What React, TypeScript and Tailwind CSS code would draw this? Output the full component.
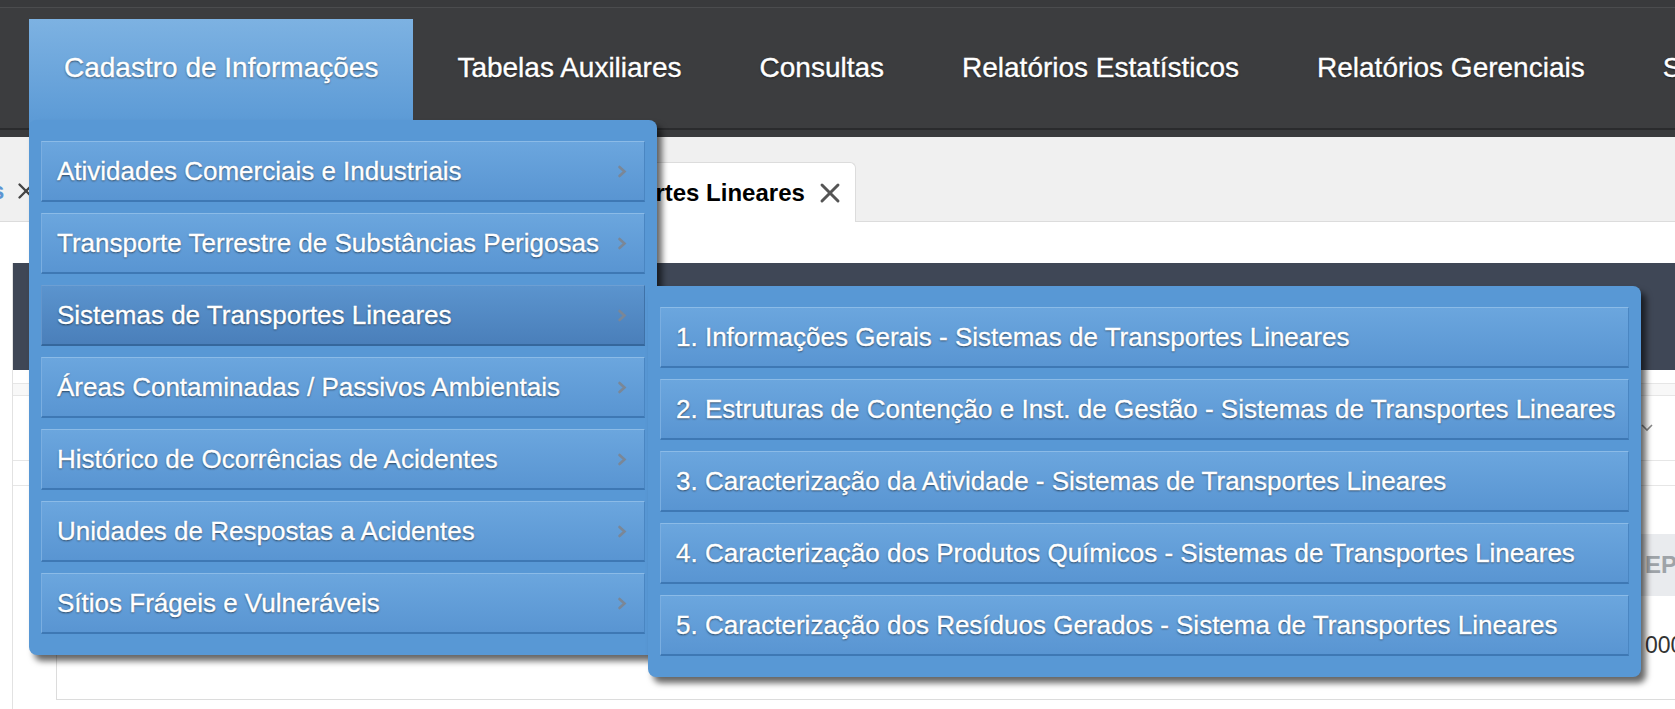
import { X } from "lucide-react";

const navItems = [
  "Tabelas Auxiliares",
  "Consultas",
  "Relatórios Estatísticos",
  "Relatórios Gerenciais",
  "Sistema",
];

const menuItems = [
  "Atividades Comerciais e Industriais",
  "Transporte Terrestre de Substâncias Perigosas",
  "Sistemas de Transportes Lineares",
  "Áreas Contaminadas / Passivos Ambientais",
  "Histórico de Ocorrências de Acidentes",
  "Unidades de Respostas a Acidentes",
  "Sítios Frágeis e Vulneráveis",
];

const subItems = [
  "1. Informações Gerais - Sistemas de Transportes Lineares",
  "2. Estruturas de Contenção e Inst. de Gestão - Sistemas de Transportes Lineares",
  "3. Caracterização da Atividade - Sistemas de Transportes Lineares",
  "4. Caracterização dos Produtos Químicos - Sistemas de Transportes Lineares",
  "5. Caracterização dos Resíduos Gerados - Sistema de Transportes Lineares",
];

const Chevron = () => (
  <svg width="10" height="13" viewBox="0 0 10 13" className="shrink-0">
    <path d="M2.5 2 L7.5 6.5 L2.5 11" stroke="#7a8797" strokeWidth="2.6" fill="none" strokeLinecap="round" />
  </svg>
);

const MenuItem = ({ label, active, arrow }: { label: string; active?: boolean; arrow?: boolean }) => (
  <div
    className={
      "h-[61px] flex items-center justify-between pl-[15px] pr-[17px] text-[26px] text-white whitespace-nowrap border border-b-2 [text-shadow:0_1px_2px_rgba(0,0,0,0.6)] [-webkit-text-stroke:0.35px_white] " +
      (active
        ? "bg-gradient-to-b from-[#5b94ce] to-[#4a7fba] border-t-[#6d9fd3] border-l-[#6496cc] border-r-[#3f72a8] border-b-[#35679c]"
        : "bg-gradient-to-b from-[#6ba6de] to-[#5995d2] border-t-[#8bbbe7] border-l-[#7aaee1] border-r-[#4a86c2] border-b-[#3e78b4]")
    }
  >
    <span>{label}</span>
    {arrow && <Chevron />}
  </div>
);

export default function App() {
  return (
    <div className="relative h-[709px] w-[1675px] overflow-hidden bg-white font-['Liberation_Sans',Arial,sans-serif]">
      {/* top navigation */}
      <nav className="h-[137px] bg-[#3c3d3f]">
        <div className="h-[7px] bg-[#393a3c]" />
        <div className="h-px bg-[#4b4c4e]" />
        <div className="h-[120px] flex items-end pl-[29px]">
          <div className="h-[109px] px-[35px] pt-[33px] mr-[5px] bg-gradient-to-b from-[#7db2e2] to-[#5a99d5] text-white text-[28px] leading-[32px] whitespace-nowrap [text-shadow:0_1px_2px_rgba(0,0,0,0.55)] [-webkit-text-stroke:0.35px_white]">
            Cadastro de Informações
          </div>
          {navItems.map((n) => (
            <div
              key={n}
              className="h-[109px] px-[39px] pt-[33px] text-white text-[28px] leading-[32px] whitespace-nowrap [text-shadow:0_1px_2px_rgba(0,0,0,0.6)] [-webkit-text-stroke:0.35px_white]"
            >
              {n}
            </div>
          ))}
        </div>
        <div className="h-[2px] bg-[#2a2b2d]" />
        <div className="h-[7px] bg-[#3a3b3d]" />
      </nav>

      {/* tab strip */}
      <div className="h-[85px] bg-[#f0f0f0] border-b border-[#dcdcdc] flex items-end">
        <div className="h-[60px] -ml-[112px] flex items-center gap-[9px] pr-[4px] text-[23px] font-bold text-[#5b95d3]">
          <span>Atividades</span>
          <X size={26} strokeWidth={2.2} className="text-[#444]" />
        </div>
        <div className="h-[60px] ml-[351px] -mb-px bg-white border border-b-0 border-[#dcdcdc] rounded-t-[6px] pl-[20px] pr-[9px] flex items-center gap-[9px]">
          <span className="text-[24px] font-bold text-black whitespace-nowrap">Sistemas de Transportes Lineares</span>
          <X size={32} strokeWidth={2.2} className="text-[#555]" />
        </div>
      </div>

      {/* page content */}
      <div className="pl-[12px] pt-[41px]">
        <div className="border-l border-[#e2e2e2] h-[446px]">
          <div className="h-[107px] bg-[#3f4756]" />
          <div className="h-[13px]" />
          <div className="h-[13px] bg-[#f8f8f8] border-y border-[#e6e6e6]" />
          <div className="h-[64px] flex justify-end items-start pt-[28px] pr-[22px]">
            <svg width="12" height="8" viewBox="0 0 12 8">
              <path d="M1 1 L6 6 L11 1" stroke="#888" strokeWidth="1.6" fill="none" />
            </svg>
          </div>
          <div className="h-[26px] border-y border-[#e6e6e6]" />
          <div className="h-[48px]" />
          <div className="ml-[43px] border-l border-b border-[#dcdcdc]">
            <div className="h-[62px] bg-[#e9ebee] flex items-center">
              <div className="w-[1588px] shrink-0" />
              <span className="text-[24px] font-bold text-[#9ea3a8]">EP</span>
            </div>
            <div className="h-[103px] flex items-center pb-[5px]">
              <div className="w-[1588px] shrink-0" />
              <span className="text-[23px] text-[#333]">000</span>
            </div>
          </div>
        </div>
      </div>

      {/* dropdown menu */}
      <div className="absolute left-[29px] top-[120px] w-[628px] h-[535px] rounded-[8px] bg-[#5898d5] shadow-[5px_6px_6px_rgba(0,0,0,0.6)] px-[12px] pt-[21px] flex flex-col gap-[11px]">
        {menuItems.map((m, i) => (
          <MenuItem key={m} label={m} active={i === 2} arrow />
        ))}
      </div>

      {/* submenu */}
      <div className="absolute left-[648px] top-[286px] w-[993px] h-[391px] rounded-[8px] bg-[#5898d5] shadow-[5px_6px_6px_rgba(0,0,0,0.6)] px-[12px] pt-[21px] flex flex-col gap-[11px]">
        {subItems.map((s) => (
          <MenuItem key={s} label={s} />
        ))}
      </div>
    </div>
  );
}
